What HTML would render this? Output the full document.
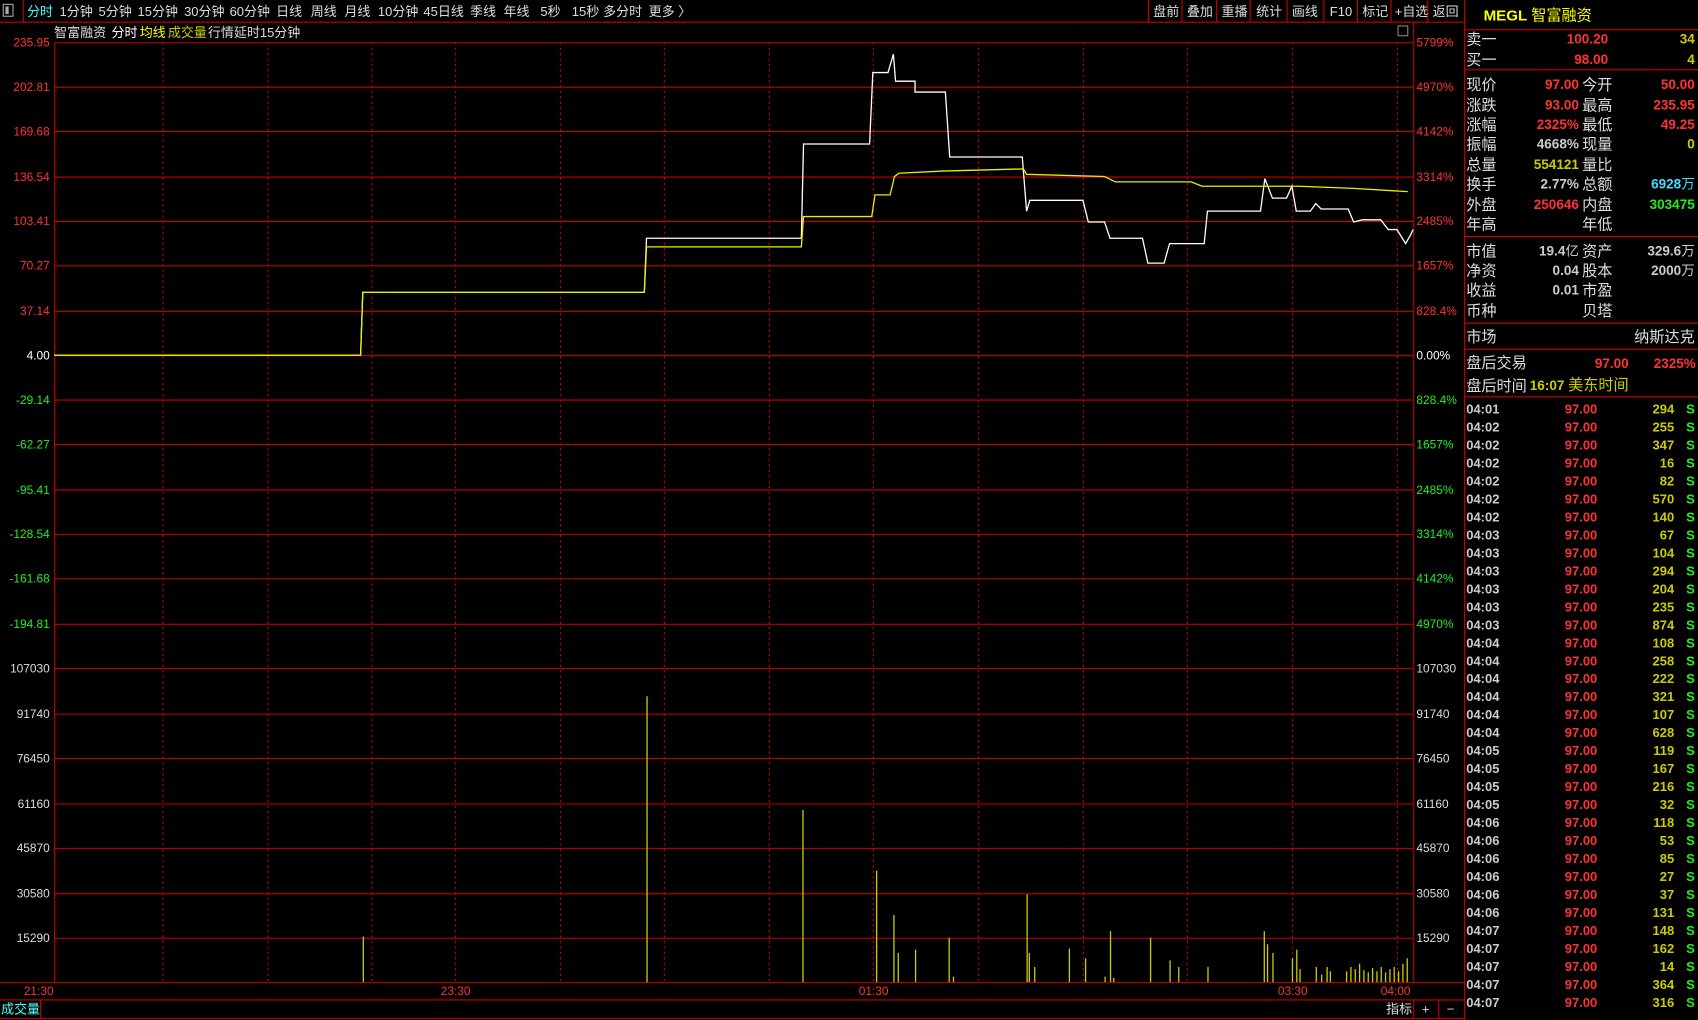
<!DOCTYPE html>
<html><head><meta charset="utf-8"><style>
html,body{margin:0;padding:0;background:#000;overflow:hidden}
svg{display:block}
text{font-family:"Liberation Sans","Noto Sans CJK SC",sans-serif;}
</style></head><body>
<svg width="1698" height="1020" viewBox="0 0 1568 942" preserveAspectRatio="none" xmlns="http://www.w3.org/2000/svg">
<rect width="1568" height="942" fill="#000"/>
<!-- top toolbar -->
<line x1="0" y1="20.5" x2="1352" y2="20.5" stroke="#c00" stroke-width="1"/>
<rect x="3" y="4" width="9" height="11" fill="none" stroke="#aaa"/><rect x="5" y="6" width="3" height="7" fill="#aaa"/>
<line x1="21.5" y1="0" x2="21.5" y2="20" stroke="#c00"/>
<g font-size="12" fill="#ddd">
<text x="25" y="15" fill="#4ff">分时</text>
<text x="55" y="15">1分钟</text><text x="91" y="15">5分钟</text><text x="127" y="15">15分钟</text>
<text x="170" y="15">30分钟</text><text x="212" y="15">60分钟</text><text x="255" y="15">日线</text>
<text x="287" y="15">周线</text><text x="318" y="15">月线</text><text x="349" y="15">10分钟</text>
<text x="391" y="15">45日线</text><text x="434" y="15">季线</text><text x="465" y="15">年线</text>
<text x="499" y="15">5秒</text><text x="528" y="15">15秒</text><text x="557" y="15">多分时</text><text x="599" y="15">更多 〉</text>
<text x="1065" y="15">盘前</text><text x="1096" y="15">叠加</text><text x="1128" y="15">重播</text>
<text x="1160" y="15">统计</text><text x="1193" y="15">画线</text><text x="1228" y="15">F10</text>
<text x="1258" y="15">标记</text><text x="1288" y="15">+自选</text><text x="1323" y="15">返回</text>
</g>
<g stroke="#c00"><line x1="1060.5" y1="0" x2="1060.5" y2="20"/><line x1="1091.5" y1="0" x2="1091.5" y2="20"/><line x1="1123.5" y1="0" x2="1123.5" y2="20"/><line x1="1154.5" y1="0" x2="1154.5" y2="20"/><line x1="1188.5" y1="0" x2="1188.5" y2="20"/><line x1="1222.5" y1="0" x2="1222.5" y2="20"/><line x1="1253.5" y1="0" x2="1253.5" y2="20"/><line x1="1284.5" y1="0" x2="1284.5" y2="20"/><line x1="1318.5" y1="0" x2="1318.5" y2="20"/></g>
<g font-size="12"><text x="50" y="34" fill="#ddd">智富融资</text><text x="103" y="34" fill="#fff">分时</text><text x="129" y="34" fill="#ff0">均线</text><text x="155" y="34" fill="#cc0">成交量</text><text x="192" y="34" fill="#ddd">行情延时15分钟</text></g>
<rect x="1291" y="24" width="9" height="9" fill="none" stroke="#888"/>
<!-- plot frame -->
<line x1="50.5" y1="39" x2="50.5" y2="907" stroke="#c00"/>
<line x1="1305.5" y1="21" x2="1305.5" y2="907" stroke="#c00"/>
<g stroke="#c00" stroke-width="1" stroke-dasharray="2,3">
<line x1="150.5" y1="39" x2="150.5" y2="907"/><line x1="247.5" y1="39" x2="247.5" y2="907"/><line x1="343.5" y1="39" x2="343.5" y2="907"/><line x1="420.5" y1="39" x2="420.5" y2="907"/><line x1="517.5" y1="39" x2="517.5" y2="907"/><line x1="613.5" y1="39" x2="613.5" y2="907"/><line x1="710.5" y1="39" x2="710.5" y2="907"/><line x1="806.5" y1="39" x2="806.5" y2="907"/><line x1="903.5" y1="39" x2="903.5" y2="907"/><line x1="1000.5" y1="39" x2="1000.5" y2="907"/><line x1="1096.5" y1="39" x2="1096.5" y2="907"/><line x1="1193.5" y1="39" x2="1193.5" y2="907"/><line x1="1290.5" y1="39" x2="1290.5" y2="907"/>
</g>
<g stroke="#c00" stroke-width="1">
<line x1="50" y1="39.5" x2="1305" y2="39.5"/><line x1="50" y1="80.5" x2="1305" y2="80.5"/><line x1="50" y1="121.5" x2="1305" y2="121.5"/><line x1="50" y1="163.5" x2="1305" y2="163.5"/><line x1="50" y1="204.5" x2="1305" y2="204.5"/><line x1="50" y1="245.5" x2="1305" y2="245.5"/><line x1="50" y1="287.5" x2="1305" y2="287.5"/><line x1="50" y1="328.5" x2="1305" y2="328.5"/><line x1="50" y1="369.5" x2="1305" y2="369.5"/><line x1="50" y1="410.5" x2="1305" y2="410.5"/><line x1="50" y1="452.5" x2="1305" y2="452.5"/><line x1="50" y1="493.5" x2="1305" y2="493.5"/><line x1="50" y1="534.5" x2="1305" y2="534.5"/><line x1="50" y1="576.5" x2="1305" y2="576.5"/><line x1="50" y1="617.5" x2="1305" y2="617.5"/><line x1="50" y1="659.5" x2="1305" y2="659.5"/><line x1="50" y1="700.5" x2="1305" y2="700.5"/><line x1="50" y1="742.5" x2="1305" y2="742.5"/><line x1="50" y1="783.5" x2="1305" y2="783.5"/><line x1="50" y1="825.5" x2="1305" y2="825.5"/><line x1="50" y1="866.5" x2="1305" y2="866.5"/>
<line x1="0" y1="907.5" x2="1352" y2="907.5"/><line x1="0" y1="923.5" x2="1352" y2="923.5"/><line x1="0" y1="940.5" x2="1352" y2="940.5"/>
<line x1="37.5" y1="924" x2="37.5" y2="940"/><line x1="1352.5" y1="0" x2="1352.5" y2="942"/>
</g>
<g font-size="11" text-anchor="end">
<text x="46" y="43" fill="#f33">235.95</text><text x="46" y="84" fill="#f33">202.81</text><text x="46" y="125" fill="#f33">169.68</text><text x="46" y="167" fill="#f33">136.54</text><text x="46" y="208" fill="#f33">103.41</text><text x="46" y="249" fill="#f33">70.27</text><text x="46" y="291" fill="#f33">37.14</text><text x="46" y="332" fill="#fff">4.00</text>
<text x="46" y="373" fill="#2e2">-29.14</text><text x="46" y="414" fill="#2e2">-62.27</text><text x="46" y="456" fill="#2e2">-95.41</text><text x="46" y="497" fill="#2e2">-128.54</text><text x="46" y="538" fill="#2e2">-161.68</text><text x="46" y="580" fill="#2e2">-194.81</text>
<g fill="#ddd"><text x="46" y="621">107030</text><text x="46" y="663">91740</text><text x="46" y="704">76450</text><text x="46" y="746">61160</text><text x="46" y="787">45870</text><text x="46" y="829">30580</text><text x="46" y="870">15290</text></g>
</g>
<g font-size="11">
<text x="1308" y="43" fill="#f33">5799%</text><text x="1308" y="84" fill="#f33">4970%</text><text x="1308" y="125" fill="#f33">4142%</text><text x="1308" y="167" fill="#f33">3314%</text><text x="1308" y="208" fill="#f33">2485%</text><text x="1308" y="249" fill="#f33">1657%</text><text x="1308" y="291" fill="#f33">828.4%</text><text x="1308" y="332" fill="#fff">0.00%</text>
<text x="1308" y="373" fill="#2e2">828.4%</text><text x="1308" y="414" fill="#2e2">1657%</text><text x="1308" y="456" fill="#2e2">2485%</text><text x="1308" y="497" fill="#2e2">3314%</text><text x="1308" y="538" fill="#2e2">4142%</text><text x="1308" y="580" fill="#2e2">4970%</text>
<g fill="#ddd"><text x="1308" y="621">107030</text><text x="1308" y="663">91740</text><text x="1308" y="704">76450</text><text x="1308" y="746">61160</text><text x="1308" y="787">45870</text><text x="1308" y="829">30580</text><text x="1308" y="870">15290</text></g>
<g fill="#f33"><text x="22" y="919">21:30</text><text x="407" y="919">23:30</text><text x="793" y="919">01:30</text><text x="1180" y="919">03:30</text><text x="1275" y="919">04:00</text></g>
<text x="1" y="936" fill="#4ff" font-size="12">成交量</text>
<text x="1280" y="936" fill="#ddd" font-size="12">指标</text><text x="1313" y="936" fill="#ddd" font-size="12">+</text><text x="1336" y="936" fill="#ddd" font-size="12">−</text>
</g>
<g stroke="#c00"><line x1="1305.5" y1="924" x2="1305.5" y2="940"/><line x1="1328.5" y1="924" x2="1328.5" y2="940"/></g>
<!-- volume bars -->
<g stroke="#cc0" stroke-width="1.2">
<line x1="335.5" y1="907" x2="335.5" y2="865"/><line x1="597.5" y1="907" x2="597.5" y2="643"/><line x1="741.5" y1="907" x2="741.5" y2="748"/><line x1="809.5" y1="907" x2="809.5" y2="804"/><line x1="825.5" y1="907" x2="825.5" y2="845"/><line x1="829.5" y1="907" x2="829.5" y2="880"/><line x1="845.5" y1="907" x2="845.5" y2="877"/><line x1="876.5" y1="907" x2="876.5" y2="866"/><line x1="880.5" y1="907" x2="880.5" y2="902"/><line x1="948.5" y1="907" x2="948.5" y2="826"/><line x1="950.5" y1="907" x2="950.5" y2="880"/><line x1="955.5" y1="907" x2="955.5" y2="893"/><line x1="987.5" y1="907" x2="987.5" y2="876"/><line x1="1002.5" y1="907" x2="1002.5" y2="885"/><line x1="1020.5" y1="907" x2="1020.5" y2="902"/><line x1="1025.5" y1="907" x2="1025.5" y2="860"/><line x1="1028.5" y1="907" x2="1028.5" y2="903"/><line x1="1062.5" y1="907" x2="1062.5" y2="866"/><line x1="1080.5" y1="907" x2="1080.5" y2="887"/><line x1="1088.5" y1="907" x2="1088.5" y2="893"/><line x1="1115.5" y1="907" x2="1115.5" y2="893"/><line x1="1167.5" y1="907" x2="1167.5" y2="860"/><line x1="1170.5" y1="907" x2="1170.5" y2="872"/><line x1="1175.5" y1="907" x2="1175.5" y2="880"/><line x1="1193.5" y1="907" x2="1193.5" y2="885"/><line x1="1197.5" y1="907" x2="1197.5" y2="877"/><line x1="1200.5" y1="907" x2="1200.5" y2="895"/><line x1="1215.5" y1="907" x2="1215.5" y2="893"/><line x1="1220.5" y1="907" x2="1220.5" y2="900"/><line x1="1225.5" y1="907" x2="1225.5" y2="893"/><line x1="1228.5" y1="907" x2="1228.5" y2="897"/><line x1="1243.5" y1="907" x2="1243.5" y2="897"/><line x1="1247.5" y1="907" x2="1247.5" y2="893"/><line x1="1251.5" y1="907" x2="1251.5" y2="895"/><line x1="1255.5" y1="907" x2="1255.5" y2="890"/><line x1="1259.5" y1="907" x2="1259.5" y2="896"/><line x1="1263.5" y1="907" x2="1263.5" y2="898"/><line x1="1267.5" y1="907" x2="1267.5" y2="894"/><line x1="1271.5" y1="907" x2="1271.5" y2="897"/><line x1="1275.5" y1="907" x2="1275.5" y2="893"/><line x1="1279.5" y1="907" x2="1279.5" y2="898"/><line x1="1283.5" y1="907" x2="1283.5" y2="895"/><line x1="1287.5" y1="907" x2="1287.5" y2="893"/><line x1="1291.5" y1="907" x2="1291.5" y2="897"/><line x1="1295.5" y1="907" x2="1295.5" y2="890"/><line x1="1299.5" y1="907" x2="1299.5" y2="885"/>
</g>
<!-- price line -->
<polyline fill="none" stroke="#fff" stroke-width="1.2" points="50,328 333,328 335,270 595,270 597,220 740,220 742,133 803,133 806,67 820,67 825,50 827,75 845,75 845,85 873,85 877,145 944,145 948,195 951,185 1000,185 1005,205 1020,205 1025,220 1055,220 1060,243 1075,243 1080,225 1112,225 1115,195 1164,195 1168,165 1175,183 1188,183 1193,172 1197,195 1210,195 1215,188 1220,193 1245,193 1250,205 1258,203 1275,203 1282,212 1290,212 1298,225 1302,218 1305,212"/>
<polyline fill="none" stroke="#ee0" stroke-width="1.2" points="50,328 333,328 335,270 595,270 597,228 740,228 742,200 805,200 808,180 822,180 826,163 830,160 870,158 945,156 948,161 1020,163 1030,168 1100,168 1110,172 1200,172 1250,174 1300,177"/>
<!-- right panel -->
<g stroke="#c00"><line x1="1352" y1="27.5" x2="1568" y2="27.5"/><line x1="1352" y1="64.5" x2="1568" y2="64.5"/><line x1="1352" y1="218.5" x2="1568" y2="218.5"/><line x1="1352" y1="298.5" x2="1568" y2="298.5"/><line x1="1352" y1="322.5" x2="1568" y2="322.5"/><line x1="1352" y1="366.5" x2="1568" y2="366.5"/></g>
<text x="1370" y="19" fill="#ff0" font-size="14" font-weight="bold">MEGL <tspan font-weight="normal">智富融资</tspan></text>
<g font-size="14" fill="#ddd">
<text x="1354" y="41">卖一</text><text x="1354" y="60">买一</text>
<text x="1354" y="83">现价</text><text x="1354" y="102">涨跌</text><text x="1354" y="120">涨幅</text><text x="1354" y="138">振幅</text><text x="1354" y="157">总量</text><text x="1354" y="175">换手</text><text x="1354" y="194">外盘</text><text x="1354" y="212">年高</text>
<text x="1461" y="83">今开</text><text x="1461" y="102">最高</text><text x="1461" y="120">最低</text><text x="1461" y="138">现量</text><text x="1461" y="157">量比</text><text x="1461" y="175">总额</text><text x="1461" y="194">内盘</text><text x="1461" y="212">年低</text>
<text x="1354" y="237">市值</text><text x="1354" y="255">净资</text><text x="1354" y="273">收益</text><text x="1354" y="292">币种</text>
<text x="1461" y="237">资产</text><text x="1461" y="255">股本</text><text x="1461" y="273">市盈</text><text x="1461" y="292">贝塔</text>
<text x="1354" y="316">市场</text><text x="1565" y="316" text-anchor="end">纳斯达克</text>
<text x="1354" y="340">盘后交易</text><text x="1354" y="361">盘后时间</text>
</g>
<g font-size="12.5" font-weight="bold" text-anchor="end">
<text x="1485" y="40" fill="#f33">100.20</text><text x="1565" y="40" fill="#cc0">34</text>
<text x="1485" y="59" fill="#f33">98.00</text><text x="1565" y="59" fill="#cc0">4</text>
<text x="1458" y="82" fill="#f33">97.00</text><text x="1458" y="101" fill="#f33">93.00</text><text x="1458" y="119" fill="#f33">2325%</text><text x="1458" y="137" fill="#ccc">4668%</text><text x="1458" y="156" fill="#cc0">554121</text><text x="1458" y="174" fill="#ccc">2.77%</text><text x="1458" y="193" fill="#f33">250646</text>
<text x="1565" y="82" fill="#f33">50.00</text><text x="1565" y="101" fill="#f33">235.95</text><text x="1565" y="119" fill="#f33">49.25</text><text x="1565" y="137" fill="#cc0">0</text><text x="1565" y="174" fill="#4df">6928<tspan font-weight="normal">万</tspan></text><text x="1565" y="193" fill="#2e2">303475</text>
<g fill="#ccc"><text x="1458" y="236">19.4<tspan font-weight="normal">亿</tspan></text><text x="1458" y="254">0.04</text><text x="1458" y="272">0.01</text><text x="1565" y="236">329.6<tspan font-weight="normal">万</tspan></text><text x="1565" y="254">2000<tspan font-weight="normal">万</tspan></text></g>
<text x="1504" y="340" fill="#f33">97.00</text><text x="1566" y="340" fill="#f33">2325%</text>
<text x="1504" y="360" fill="#cc0">16:07 <tspan font-weight="normal" font-size="14">美东时间</tspan></text>
</g>
<g font-size="12" font-weight="bold" id="trades">
<text x="1354" y="382" fill="#ccc">04:01</text><text x="1475" y="382" fill="#f33" text-anchor="end">97.00</text><text x="1546" y="382" fill="#cc0" text-anchor="end">294</text><text x="1557" y="382" fill="#2e2">S</text>
</g>
<script>
var d=[["04:02",255],["04:02",347],["04:02",16],["04:02",82],["04:02",570],["04:02",140],["04:03",67],["04:03",104],["04:03",294],["04:03",204],["04:03",235],["04:03",874],["04:04",108],["04:04",258],["04:04",222],["04:04",321],["04:04",107],["04:04",628],["04:05",119],["04:05",167],["04:05",216],["04:05",32],["04:06",118],["04:06",53],["04:06",85],["04:06",27],["04:06",37],["04:06",131],["04:07",148],["04:07",162],["04:07",14],["04:07",364],["04:07",316]];
var g=document.getElementById('trades'),ns='http://www.w3.org/2000/svg';
function t(x,y,f,s,a){var e=document.createElementNS(ns,'text');e.setAttribute('x',x);e.setAttribute('y',y);e.setAttribute('fill',f);if(a)e.setAttribute('text-anchor',a);e.textContent=s;g.appendChild(e);}
d.forEach(function(r,i){var y=(382+(i+1)*16.6).toFixed(1);t(1354,y,'#ccc',r[0]);t(1475,y,'#f33','97.00','end');t(1546,y,'#cc0',r[1],'end');t(1557,y,'#2e2','S');});
</script>
</svg>
</body></html>
